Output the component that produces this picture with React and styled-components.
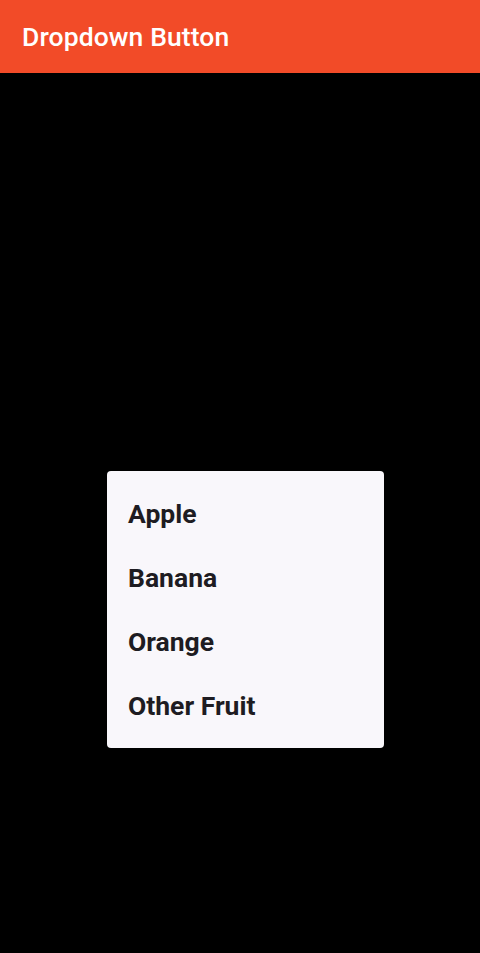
import React from "react";
import styled, { createGlobalStyle } from "styled-components";

const GlobalStyle = createGlobalStyle`
  html, body {
    margin: 0;
    padding: 0;
    background: #000;
  }
  body {
    font-family: Roboto, "Noto Sans", sans-serif;
  }
`;

const Screen = styled.div`
  width: 480px;
  height: 953px;
  background: #000;
  display: flex;
  flex-direction: column;
`;

const AppBar = styled.header`
  height: 73px;
  background-color: #f24b28;
  display: flex;
  align-items: center;
  padding-left: 22px;
  box-sizing: border-box;
`;

const Title = styled.h1`
  margin: 0;
  color: #fff;
  font-size: 26.5px;
  font-weight: 500;
  letter-spacing: 0.1px;
`;

const Body = styled.main`
  flex: 1;
  padding: 398px 0 0 107px;
`;

const Menu = styled.ul`
  list-style: none;
  margin: 0;
  padding: 10px 0 11px;
  width: 277px;
  background: #f9f7fb;
  border-radius: 4px;
  box-sizing: border-box;
`;

const MenuItem = styled.li`
  height: 64px;
  display: flex;
  align-items: center;
  padding: 1px 0 0 21px;
  box-sizing: border-box;
  color: #1e1c22;
  font-size: 26.5px;
  font-weight: 700;
`;

const fruits = ["Apple", "Banana", "Orange", "Other Fruit"];

export default function App() {
  return (
    <Screen>
      <GlobalStyle />
      <AppBar>
        <Title>Dropdown Button</Title>
      </AppBar>
      <Body>
        <Menu>
          {fruits.map((f) => (
            <MenuItem key={f}>{f}</MenuItem>
          ))}
        </Menu>
      </Body>
    </Screen>
  );
}
